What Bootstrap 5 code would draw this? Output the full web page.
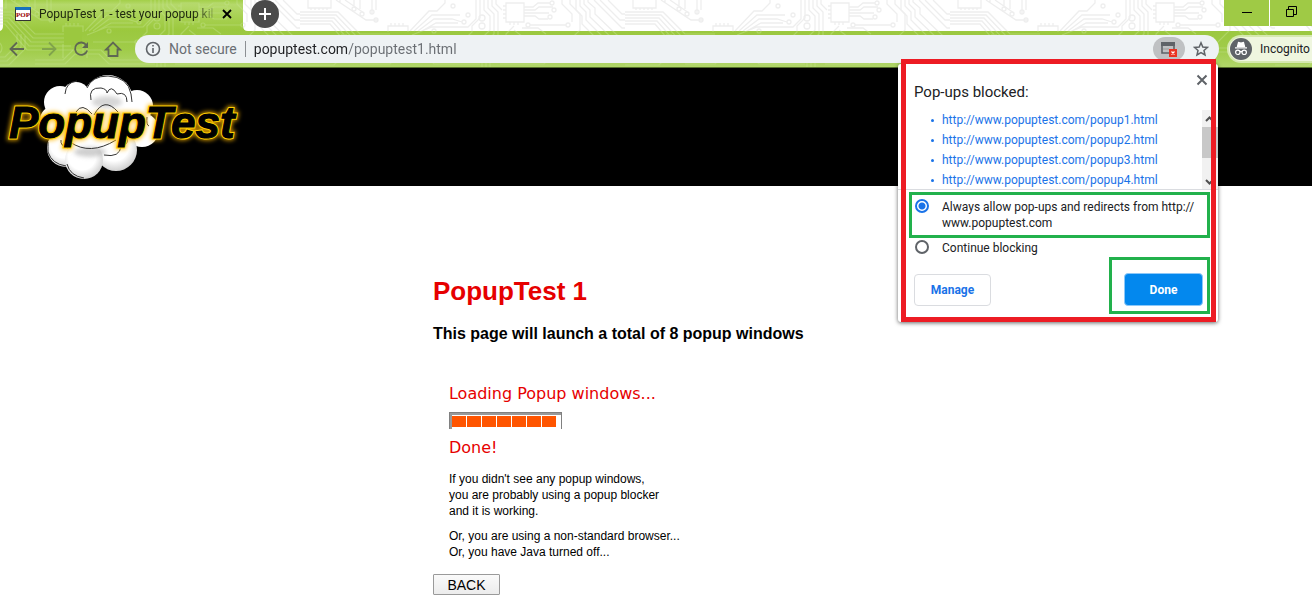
<!DOCTYPE html>
<html lang="en">
<head>
<meta charset="utf-8">
<meta name="viewport" content="width=device-width, initial-scale=1">
<title>PopupTest 1 - test your popup killer</title>
<link href="https://cdn.jsdelivr.net/npm/bootstrap@5.3.0/dist/css/bootstrap.min.css" rel="stylesheet">
<style>
  body { font-family: Roboto, sans-serif; font-size: 12px; line-height: 16px; color: #202124; overflow-x: hidden; }
  button { padding: 0; border: 0; background: none; color: inherit; }
  svg { display: block; flex: none; }
  .chrome-top { height: 68px; border-bottom: 1px solid #55702a; }
  .circuit { width: 100%; height: 67px; }
  .tab-strip { height: 31px; }
  .edge { width: 3px; height: 28px; }
  .page-tab { width: 240px; height: 28px; padding: 0 10px 0 12px; gap: 8px; }
  .tab-title { width: 175px; overflow: hidden; white-space: nowrap; color: #202a10;
    -webkit-mask-image: linear-gradient(90deg, #000 155px, transparent 180px); mask-image: linear-gradient(90deg, #000 155px, transparent 180px); }
  .favicon { font: bold 7px/10px "Liberation Serif", serif; width: 16px; height: 14px; border: 1px solid #333; border-top: 3px solid #1673bd; background: #fff; color: #900; text-align: center; flex: none; }
  .new-tab { width: 28px; height: 28px; background: #4a4a4a; margin-left: 8px; }
  .win-buttons { height: 26px; gap: 1px; }
  .win-btn { width: 45px; height: 26px; background: #9fca45; }
  .win-btn + .win-btn { width: 42px; }
  .tools { height: 36px; padding-left: 8px; }
  .nav-tools { width: 127px; gap: 14px; color: #5f6853; }
  .address { height: 28px; background: #eef2f4; font-size: 14px; line-height: 20px; padding: 0 10px; color: #6a6e73; }
  .secure-label { line-height: 16px; border-right: 1px solid #8c9094; }
  .url-wrap { height: 20px; }
  .url-field { border: 0; outline: 0; background: none; padding: 0; color: transparent; caret-color: #202124; font: 14px/20px Roboto, sans-serif;
    background: linear-gradient(90deg, #202124 93px, #6a6e73 93px) text; -webkit-background-clip: text; }
  .blocked-chip { width: 32px; height: 24px; background: #bfc1c3; }
  .incognito { width: 85px; height: 28px; margin-left: 8px; background: #eff6df; border: 2px solid #d6e9b0; border-right: 0; gap: 8px; padding-left: 1px; white-space: nowrap; }
  .blocked-pop { top: 64px; right: 94px; width: 320px; background: #fff; z-index: 5; box-shadow: 0 1px 4px #0009; border-radius: 3px; padding-bottom: 8px; }
  .blocked-pop::after { content: ""; position: absolute; inset: -5px 2px 0 3px; border: 5px solid #ed1c24; pointer-events: none; }
  .pop-title { font-size: 15px; line-height: 24px; padding: 16px 16px 6px; margin: 0; font-weight: 400; }
  .pop-list { height: 80px; border-bottom: 1px solid #dadce0; }
  .pop-list ul { padding-left: 44px; color: #1a73e8; line-height: 20px; list-style: none; }
  .pop-list li::before { content: ""; float: left; width: 3px; height: 3px; margin: 9px 0 0 -11px; border-radius: 50%; background: #1a73e8; }
  .pop-list a { color: #1a73e8; text-decoration: none; }
  .scroller { width: 16px; background: #f1f1f1; }
  .scroller .thumb { height: 31px; background: #c8c8c8; }
  .choice { padding-left: 17px; gap: 13px; }
  .picked { border: 3px solid #22b14c; margin: 2px 8px 2px 11px; padding: 4px 0 4px 3px; }
  .choice input { appearance: none; width: 14px; height: 14px; border: 2px solid #5f6368; border-radius: 50%; margin: 0; flex: none; }
  .choice input:checked { border-color: #1a73e8; background: radial-gradient(circle, #1a73e8 0 3px, #fff 4px); }
  .actions { margin-top: 1px; padding: 0 8px 0 16px; }
  .done-frame { border: 3px solid #22b14c; padding: 13px 4px 5px 12px; }
  .manage { width: 77px; height: 32px; border: 1px solid #dadce0; border-radius: 4px; color: #1a73e8; font-weight: 700; margin-bottom: 8px; }
  .done { width: 79px; height: 33px; background: #0388ee; border: 1px solid #8dc8f8; border-radius: 4px; color: #fff; font-weight: 700; }
  .banner { background: #000; height: 118px; }
  .page-main { padding: 90px 16px 0 33%; font-family: "Liberation Sans", sans-serif; color: #000; }
  .page-main h1 { font-size: 26px; line-height: 30px; font-weight: 700; color: #e60000; margin: 0 0 18px; }
  .page-main h2 { font-size: 16px; line-height: 20px; font-weight: 700; margin: 0 0 40px; }
  .status { padding-left: 16px; font-size: 12px; line-height: 16px; }
  .status strong { display: block; font: 16px/20px "DejaVu Sans", sans-serif; color: #e60000; }
  .status p { margin: 13px 0 0; }
  .status p + p { margin: 9px 0 14px; }
  .meter { width: 113px; height: 17px; margin: 8px 0 9px; border: 1px solid #808080; border-bottom: 0; padding: 2px; gap: 1px; box-shadow: inset 2px 2px 0 #999; }
  .meter span { width: 14px; height: 11px; background: #ff5500; }
  .back { width: 67px; height: 21px; border: 1px solid #9a9a9a; border-radius: 1px; background: linear-gradient(#fafafa, #ececec); font-size: 14px; line-height: 18px; }
</style>
</head>
<body>
<header class="chrome-top position-relative">
  <svg class="circuit position-absolute top-0 start-0" aria-hidden="true">
    <defs>
      <g id="traces">
        <path d="M8-2V8H31V-2M11 8v2M15 8v2M19 8v2M23 8v2M27 8v2M88 32V26H108V32M91 26v-3M95 26v-3M99 26v-3M103 26v-3"/>
        <path d="M206 3H224V22H206ZM203 6h3M203 10h3M203 14h3M203 18h3M210 22v3M214 22v3M218 22v3"/>
        <path d="M0 12H38L60 34H90M0 15H36L58 38H92M0 18H34L56 42H94M0 21H32L54 46H96M0 24H30L52 50H98M36 0L66 20H78M40 0V2M45 0L64 13M54 0V7M60 0V9M72 0V14M76 0V10"/>
        <path d="M110 31L129 11H137L145 3V0M114 31L132 15H160M118 31L134 19H152L162 22M122 31L136 23H158M112 35L132 27H168L176 19V0M118 42H162L172 32V26L180 18V0"/>
        <path d="M184 0V10L190 16V30L182 38V68M188 0V8L194 14V34L186 42V68M192 0V6L198 12V38L190 46V68M196 0V4L202 10"/>
        <path d="M224 7H233L238 3H250M224 10H235L239 7H253M224 13H249M224 16H235L239 19H248M230 25H266M222 28H238L246 34M214 30L232 44H266L280 30V14L270 4V0"/>
        <path d="M262 0V4L272 14V22M276 0V10L282 16V24L312 54H325M280 0V6L286 12V20L314 48H325M284 0V4L290 10V17L316 42H325M288 0V2L295 8V14L318 36H325M294 0L322 28H325M300 0L320 20H325M308 0L322 14H325"/>
        <path d="M0 57H30L42 45V34M0 61H32L46 47V34M0 65H34L50 49V36M60 60H88L98 50H126L136 60H170M60 64H90L100 54H124L134 64H180M200 60H240L252 48H280M200 64H244L256 52H284M206 48V34L214 26M212 50V36M218 50V40M224 52V44M108 44V56M112 44V58M88 44V58"/>
        <circle cx="54" cy="9" r="2"/><circle cx="62" cy="14" r="2"/><circle cx="72" cy="12" r="2"/><circle cx="76" cy="20" r="2"/><circle cx="153" cy="6" r="2"/><circle cx="168" cy="15" r="2"/><circle cx="164" cy="22" r="2"/><circle cx="182" cy="18" r="3"/><circle cx="182" cy="26" r="3"/><circle cx="252" cy="3" r="2"/><circle cx="254" cy="10" r="2"/><circle cx="250" cy="17" r="2"/><circle cx="228" cy="25" r="2"/><circle cx="268" cy="25" r="2"/><circle cx="20" cy="48" r="7"/><circle cx="134" cy="31" r="2"/><circle cx="162" cy="42" r="2"/><circle cx="212" cy="52" r="2"/><circle cx="224" cy="54" r="2"/>
      </g>
      <pattern id="onWhite" x="300" width="325" height="68" patternUnits="userSpaceOnUse"><use href="#traces" fill="none" stroke="#eeeeee" stroke-width="1.3"/></pattern>
      <pattern id="onGreen" x="300" width="325" height="68" patternUnits="userSpaceOnUse"><use href="#traces" fill="none" stroke="#c3e28c" stroke-opacity=".45" stroke-width="1.2"/></pattern>
      <linearGradient id="tabFill" x2="0" y2="1"><stop stop-color="#a3cf49"/><stop offset=".15" stop-color="#b5d96b"/><stop offset=".6" stop-color="#a6d04f"/><stop offset="1" stop-color="#9bc83d"/></linearGradient>
      <linearGradient id="barFill" x2="0" y2="1"><stop stop-color="#9bc83f"/><stop offset=".5" stop-color="#a0cc49"/><stop offset="1" stop-color="#b1d66b"/></linearGradient>
    </defs>
    <rect width="100%" height="31" fill="#fff"/><rect width="100%" height="31" fill="url(#onWhite)"/>
    <path d="M0 31Q3 30 3 26V0H243V26Q243 31 248 31Z" fill="url(#tabFill)"/>
    <path d="M0 31Q3 30 3 26V0H243V26Q243 31 248 31Z" fill="url(#onGreen)"/>
    <rect y="31" width="100%" height="37" fill="url(#barFill)"/><rect y="31" width="100%" height="37" fill="url(#onGreen)"/>
    <rect x="64" y="28" width="18" height="17" fill="#9bc83f"/>
  </svg>
  <div class="tab-strip position-relative d-flex">
    <div class="edge"></div>
    <div class="page-tab d-flex align-items-center">
      <span class="favicon">POP</span>
      <span class="tab-title">PopupTest 1 - test your popup kil</span>
      <button type="button" aria-label="Close tab"><svg width="10" height="10" viewBox="0 0 10 10" stroke="#000" stroke-width="1.8"><path d="M1 1L9 9M9 1L1 9"/></svg></button>
    </div>
    <button type="button" class="new-tab rounded-circle d-flex align-items-center justify-content-center" aria-label="New tab"><svg width="12" height="12" viewBox="0 0 12 12" stroke="#fff" stroke-width="2"><path d="M6 0V12M0 6H12"/></svg></button>
    <div class="win-buttons d-flex ms-auto bg-white">
      <button type="button" class="win-btn d-flex align-items-center justify-content-center" aria-label="Minimize"><svg width="10" height="3"><path d="M0 .5H10" stroke="#000"/></svg></button>
      <button type="button" class="win-btn d-flex align-items-center justify-content-center" aria-label="Restore"><svg width="11" height="14" fill="none" stroke="#000"><path d="M.5 3.5H7.5V10.5H.5ZM2.5 3.5V.5H10.5V8.5H7.5"/></svg></button>
    </div>
  </div>
  <div class="tools position-relative d-flex align-items-center overflow-hidden">
    <div class="nav-tools d-flex align-items-center flex-shrink-0">
      <button type="button" aria-label="Back"><svg width="18" height="18" viewBox="0 0 18 18" fill="none" stroke="currentColor" stroke-width="1.8"><path d="M16 9H3M9 2.500L2.500 9L9 15.500"/></svg></button>
      <button type="button" aria-label="Forward"><svg width="18" height="18" viewBox="0 0 18 18" fill="none" stroke="#80a34c" stroke-width="1.8"><path d="M2 9H15M9 2.500L15.500 9L9 15.500"/></svg></button>
      <button type="button" aria-label="Reload"><svg width="18" height="18" viewBox="0 0 18 18" fill="none" stroke="currentColor" stroke-width="1.8"><path d="M14.400 5.200A6.200 6.200 0 1 0 15.200 10.500"/><path d="M16 2V8H10Z" fill="currentColor" stroke="none"/></svg></button>
      <button type="button" aria-label="Home"><svg width="18" height="18" viewBox="0 0 18 18" fill="none" stroke="currentColor" stroke-width="1.8"><path d="M2 9.500H4.500V16H13.500V9.500H16L9 2.500Z"/></svg></button>
    </div>
    <div class="address rounded-pill d-flex align-items-center flex-grow-1">
      <svg width="16" height="16" viewBox="0 0 16 16" fill="none" stroke="#5f6368" stroke-width="1.600"><circle cx="8" cy="8" r="6.500"/><path d="M8 7V12M8 4V5.600"/></svg>
      <label for="url" class="secure-label ms-2 pe-2 text-nowrap">Not secure</label>
      <div class="url-wrap d-flex flex-grow-1 ms-2">
        <input id="url" class="url-field w-100" value="popuptest.com/popuptest1.html">
      </div>
      <button type="button" class="blocked-chip rounded-pill d-flex align-items-center justify-content-center" aria-label="Pop-ups blocked"><svg width="18" height="16" viewBox="0 0 18 16"><path d="M2 2H14V12H2Z" fill="none" stroke="#5f6368" stroke-width="1.600"/><path d="M1 1H15V5H1Z" fill="#5f6368"/><path d="M3 8H9" stroke="#999"/><path d="M9 8H17V16H9Z" fill="#ea3323"/><path d="M11.500 10.500L14.500 13.500M14.500 10.500L11.500 13.500" stroke="#fff" stroke-width="1.200"/></svg></button>
      <button type="button" class="ms-2" aria-label="Bookmark"><svg width="16" height="16" viewBox="0 0 16 16" fill="none" stroke="#5f6368" stroke-width="1.500"><path d="M8 1.800L9.800 6L14.500 6.400L11 9.500L12 14L8 11.600L4 14L5 9.500L1.500 6.400L6.200 6Z"/></svg></button>
    </div>
    <div class="incognito rounded-start-pill d-flex align-items-center flex-shrink-0">
      <svg width="22" height="22" viewBox="0 0 22 22"><circle cx="11" cy="11" r="11" fill="#5f6368"/><path d="M5 9.800H17M7.500 8.500L8.500 4.500L11 5L13.500 4.500L14.500 8.500Z" fill="#fff" stroke="#fff" stroke-width="1.200"/><g fill="none" stroke="#fff" stroke-width="1.200"><circle cx="7.800" cy="14.300" r="2.200"/><circle cx="14.200" cy="14.300" r="2.200"/><path d="M10 14Q11 13 12 14"/></g></svg>
      <span>Incognito</span>
    </div>
  </div>
  <section class="blocked-pop position-absolute">
    <h2 class="pop-title">Pop-ups blocked:</h2>
    <button type="button" class="position-absolute top-0 end-0 m-2" aria-label="Close"><svg width="16" height="16" viewBox="0 0 16 16" stroke="#5f6368" stroke-width="2"><path d="M3.500 3.500L12.500 12.500M12.500 3.500L3.500 12.500"/></svg></button>
    <div class="pop-list d-flex overflow-hidden">
      <ul class="flex-grow-1 m-0">
        <li><a href="#p1">http://www.popuptest.com/popup1.html</a></li>
        <li><a href="#p2">http://www.popuptest.com/popup2.html</a></li>
        <li><a href="#p3">http://www.popuptest.com/popup3.html</a></li>
        <li><a href="#p4">http://www.popuptest.com/popup4.html</a></li>
      </ul>
      <div class="scroller d-flex flex-column">
        <svg width="16" height="17" fill="none" stroke="#505050" stroke-width="2"><path d="M4 11L7.500 7.500L11 11"/></svg>
        <div class="thumb"></div>
        <svg class="mt-auto" width="16" height="14" fill="none" stroke="#505050" stroke-width="2"><path d="M4 5L7.500 8.500L11 5"/></svg>
      </div>
    </div>
    <div class="choice picked d-flex"><input type="radio" name="allow" id="allow" checked><label for="allow">Always allow pop-ups and redirects from http://<br>www.popuptest.com</label></div>
    <div class="choice d-flex"><input type="radio" name="allow" id="block"><label for="block">Continue blocking</label></div>
    <div class="actions d-flex justify-content-between align-items-end">
      <button type="button" class="manage">Manage</button>
      <div class="done-frame"><button type="button" class="done d-block">Done</button></div>
    </div>
  </section>
</header>
<div class="banner">
  <svg width="260" height="118" viewBox="0 0 260 118" role="img" aria-label="PopupTest">
    <defs>
      <radialGradient id="puff" cx=".45" cy=".4" r=".6"><stop offset=".6" stop-color="#fff"/><stop offset="1" stop-color="#d0d0d0"/></radialGradient>
      <filter id="soft" x="-20%" y="-50%" width="140%" height="200%"><feGaussianBlur stdDeviation="2"/></filter>
    </defs>
    <g fill="#fff">
      <circle cx="60" cy="34" r="16"/><circle cx="76" cy="28" r="14"/><circle cx="108" cy="32" r="25"/><circle cx="137" cy="38" r="16"/><circle cx="142" cy="62" r="17"/><circle cx="54" cy="52" r="14"/><circle cx="95" cy="60" r="36"/>
      <circle cx="66" cy="80" r="19" fill="url(#puff)"/><circle cx="116" cy="82" r="21" fill="url(#puff)"/><circle cx="84" cy="92" r="19" fill="url(#puff)"/><ellipse cx="93" cy="56" rx="34" ry="25"/>
    </g>
    <ellipse cx="107" cy="34" rx="15" ry="6" fill="#bbb" opacity=".6" filter="url(#soft)"/>
    <ellipse cx="90" cy="84" rx="16" ry="5" fill="#bbb" opacity=".7" filter="url(#soft)"/>
    <g fill="none" stroke="#333" stroke-width="1">
      <path d="M65 26Q66 14 77 13M87 20Q92 8 108 8Q128 9 131 26L132 34M91 32Q88 19 101 20Q107 21 107 25Q111 16 117 26Q127 23 127 34M61 72Q60 78 68 80M70 74Q90 88 116 72M104 87Q120 90 121 78Q129 77 127 70M94 47Q104 28 118 44M76 44Q82 34 92 46M147 49Q146 57 149 58M48 74Q48 78 48 84Q52 96 66 98M67 96Q70 108 84 110"/>
    </g>
    <g font-family="Liberation Sans, sans-serif" font-style="italic" font-weight="700" font-size="44">
      <text x="9" y="70" fill="none" stroke="#ffb800" stroke-opacity=".8" stroke-width="5" filter="url(#soft)">PopupTest</text>
      <text x="9" y="70" fill="#000" stroke="#ffcf00" stroke-width="3">PopupTest</text>
      <text x="9" y="70" fill="#000" stroke="#000" stroke-width="1">PopupTest</text>
    </g>
  </svg>
</div>
<main class="page-main">
  <h1>PopupTest 1</h1>
  <h2>This page will launch a total of 8 popup windows</h2>
  <div class="status">
    <strong>Loading Popup windows...</strong>
    <div class="meter d-flex align-items-end" role="progressbar" aria-label="Loading" aria-valuenow="100" aria-valuemin="0" aria-valuemax="100"><span></span><span></span><span></span><span></span><span></span><span></span><span></span></div>
    <strong>Done!</strong>
    <p>If you didn't see any popup windows,<br>you are probably using a popup blocker<br>and it is working.</p>
    <p>Or, you are using a non-standard browser...<br>Or, you have Java turned off...</p>
  </div>
  <button type="button" class="back">BACK</button>
</main>
</body>
</html>
